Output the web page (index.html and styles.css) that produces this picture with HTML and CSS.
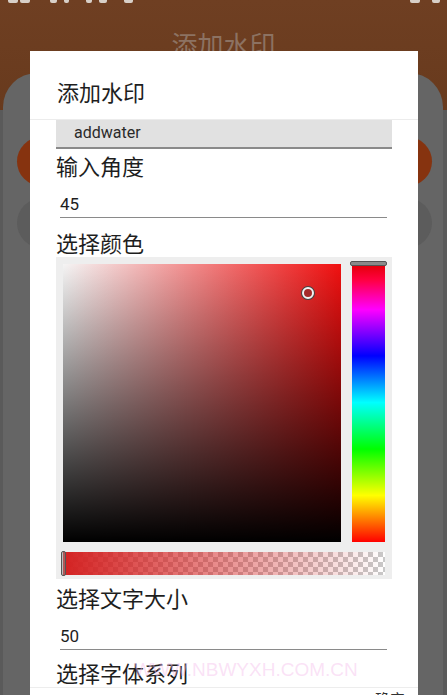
FILE: index.html
```html
<!DOCTYPE html>
<html>
<head>
<meta charset="utf-8">
<link rel="stylesheet" href="styles.css">
</head>
<body>
<div class="app">
  <div class="appbar">
    <div class="status">
      <span class="s1"></span><span class="s2"></span><span class="s3"></span><span class="s4"></span><span class="s5"></span><span class="s6"></span><span class="s7"></span>
      <span class="grow"></span>
      <span class="s8"></span><span class="s9"></span>
    </div>
    <div class="apptitle">添加水印</div>
  </div>
  <div class="card">
    <div class="pill orange"></div>
    <div class="pill grey"></div>
  </div>
</div>

<div class="dialog">
  <div class="dlg-title">添加水印</div>
  <div class="dlg-body">
    <div class="edit">addwater</div>
    <div class="label">输入角度</div>
    <div class="num">45</div>
    <div class="label l2">选择颜色</div>
    <div class="picker">
      <div class="picker-top">
        <div class="sv">
          <span class="sv-dot"></span>
        </div>
        <div class="hue">
          <span class="hue-handle"></span>
        </div>
      </div>
      <div class="alpha">
        <span class="alpha-handle"></span>
      </div>
    </div>
    <div class="label l3">选择文字大小</div>
    <div class="num">50</div>
    <div class="label l4">选择字体系列</div>
  </div>
  <div class="dlg-buttons">
    <span class="btn">确定</span>
  </div>
</div>

<div class="watermark">WWW.NBWYXH.COM.CN</div>
</body>
</html>
```
FILE: styles.css
```css
html, body {
  margin: 0;
  padding: 0;
}
body {
  width: 447px;
  height: 695px;
  overflow: hidden;
  position: relative;
  background: linear-gradient(to bottom, #6f3f22 0, #683a1d 110px, #5a5a5a 110px);
  font-family: "Noto Sans CJK SC", "Noto Sans", sans-serif;
}
.app {
  display: flex;
  flex-direction: column;
}
.appbar {
  height: 73px;
}
.status {
  display: flex;
  height: 4px;
  padding: 0 7px 0 8px;
  gap: 0;
}
.status span {
  display: block;
  height: 3px;
  background: #d8d0c8;
  border-radius: 0 0 2px 2px;
}
.status .grow { flex: 1; background: none; }
.s1 { width: 10px; }
.s2 { width: 10px; margin-left: 2px; }
.s3 { width: 7px; margin-left: 20px; }
.s4 { width: 5px; margin-left: 7px; }
.s5 { width: 6px; margin-left: 17px; }
.s6 { width: 8px; margin-left: 7px; }
.s7 { width: 9px; margin-left: 17px; }
.s8 { width: 10px; }
.s9 { width: 8px; margin-left: 12px; }
.apptitle {
  text-align: center;
  font-size: 26px;
  line-height: 30px;
  padding-top: 25px;
  color: #8c7262;
}
.card {
  margin: 0 4px 0 3px;
  height: 622px;
  background: #656565;
  border-radius: 34px 34px 0 0;
  padding-top: 64px;
  box-sizing: border-box;
}
.pill {
  height: 49px;
  margin: 0 11px 0 14px;
  border-radius: 25px;
}
.pill.orange { background: #86330f; }
.pill.grey { background: #5c5c5c; margin-top: 12px; height: 50px; }

.dialog {
  position: absolute;
  left: 30px;
  top: 51px;
  width: 388px;
  background: #ffffff;
  display: flex;
  flex-direction: column;
}
.dlg-title {
  padding: 26px 27px 14px;
  font-size: 22px;
  line-height: 28px;
  color: #1e1e1e;
  border-bottom: 1px solid #ececec;
}
.dlg-body {
  height: 567px;
  overflow: hidden;
  padding: 0 26px;
}
.edit {
  height: 27px;
  background: #e1e1e1;
  border-bottom: 2px solid #8a8a8a;
  padding-left: 18px;
  font-family: Roboto, "Liberation Sans", sans-serif;
  font-size: 16px;
  line-height: 25px;
  color: #2a2a2a;
}
.label {
  margin-top: 2px;
  font-size: 22px;
  line-height: 28px;
  color: #1e1e1e;
}
.label.l2 { margin-top: 10px; }
.label.l3 { margin-top: 4px; }
.label.l4 { margin-top: 8px; }
.num {
  margin: 0 5px 0 4px;
  padding-top: 13px;
  padding-bottom: 1px;
  height: 24px;
  line-height: 24px;
  font-family: Roboto, "Liberation Sans", sans-serif;
  font-size: 17px;
  color: #1e1e1e;
  border-bottom: 1px solid #8a8a8a;
}
.picker {
  margin-top: 1px;
  background: #eeeeee;
  padding: 7px 7px 4px 7px;
}
.picker-top {
  display: flex;
  gap: 11px;
}
.sv {
  position: relative;
  width: 278px;
  height: 278px;
  background:
    linear-gradient(to top, #000 0%, rgba(0,0,0,0) 100%),
    linear-gradient(to right, #f4f4f4 0%, #f01010 100%);
}
.sv-dot {
  position: absolute;
  left: 239px;
  top: 23px;
  width: 8px;
  height: 8px;
  border-radius: 50%;
  background: #a52a2a;
  border: 2px solid #f2f2f2;
  box-shadow: 0 0 0 1px #444;
}
.hue {
  position: relative;
  width: 33px;
  height: 279px;
  margin-top: -1px;
  background: linear-gradient(to bottom,
    #e00000 0%, #ff0040 6%, #ff00ff 16.7%, #0000ff 33.3%,
    #00ffff 50%, #00ff00 66.7%, #ffff00 83.3%, #ff0000 100%);
}
.hue-handle {
  position: absolute;
  left: -2px;
  top: -2px;
  width: 35px;
  height: 3px;
  background: #8a8a8a;
  border: 1px solid #555;
  border-radius: 2px;
}
.alpha {
  position: relative;
  margin-top: 10px;
  height: 23px;
  background:
    linear-gradient(to right, rgba(212,34,34,1) 0%, rgba(212,34,34,0) 100%),
    repeating-conic-gradient(#c8c8c8 0 25%, #ffffff 0 50%) 0 0 / 10px 10px;
}
.alpha-handle {
  position: absolute;
  left: -2px;
  top: -1px;
  width: 3px;
  height: 23px;
  border: 1px solid #555;
  border-radius: 2px;
  background: rgba(140,140,140,0.5);
}
.dlg-buttons {
  border-top: 1px solid #ededed;
  height: 40px;
  display: flex;
  justify-content: flex-end;
  padding-right: 13px;
}
.btn {
  font-size: 15px;
  line-height: 22px;
  color: #333;
}
.watermark {
  position: absolute;
  left: 134px;
  top: 658px;
  font-family: "Liberation Sans", Arial, sans-serif;
  font-size: 19px;
  line-height: 24px;
  color: rgba(245, 190, 235, 0.45);
  pointer-events: none;
}
```
